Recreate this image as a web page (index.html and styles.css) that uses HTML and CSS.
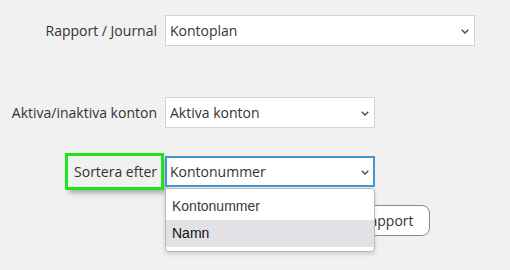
FILE: index.html
```html
<!DOCTYPE html>
<html>
    <head>
        <title>Rapporter</title>
        <link rel="stylesheet" href="styles.css">
    </head>
    <body>
        <form id="report">
            <div class="row">
                <label class="field_label" for="report_type">Rapport / Journal</label>
                <span class="select_wrap wide">
                    <select id="report_type">
                        <option>Kontoplan</option>
                    </select>
                    <svg class="chevron" width="8" height="5" viewBox="0 0 8 5"><path d="M0.7 0.7 L4 4 L7.3 0.7" /></svg>
                </span>
            </div>

            <div class="row row_spaced">
                <label class="field_label" for="active">Aktiva/inaktiva konton</label>
                <span class="select_wrap">
                    <select id="active">
                        <option>Aktiva konton</option>
                    </select>
                    <svg class="chevron" width="8" height="5" viewBox="0 0 8 5"><path d="M0.7 0.7 L4 4 L7.3 0.7" /></svg>
                </span>
            </div>

            <div class="row row_sort">
                <label class="field_label marked" for="sort">Sortera efter</label>
                <span class="select_wrap">
                    <select id="sort" class="focused">
                        <option>Kontonummer</option>
                        <option>Namn</option>
                    </select>
                    <svg class="chevron" width="8" height="5" viewBox="0 0 8 5"><path d="M0.7 0.7 L4 4 L7.3 0.7" /></svg>
                    <ul class="dropdown">
                        <li>Kontonummer</li>
                        <li class="hover">Namn</li>
                    </ul>
                </span>
            </div>

            <div class="row row_button">
                <span></span>
                <button type="button" class="report_button">Skapa rapport</button>
            </div>
        </form>
    </body>
</html>
```

FILE: styles.css
```css
html, body {
    height: 100%;
}
body {
    background: #f1f1f1;
    margin: 0px;
    font-family: "Open Sans", sans-serif;
    font-size: 14px;
    color: #333;
}
#report {
    padding-top: 15px;
    min-height: 100%;
    box-sizing: border-box;
}
.row {
    display: grid;
    grid-template-columns: 161px auto;
    column-gap: 4px;
    align-items: center;
}
.row_spaced {
    margin-top: 51px;
}
.row_sort {
    margin-top: 28px;
    position: relative;
    z-index: 2;
}
.row_button {
    margin-top: 18px;
}
.field_label {
    justify-self: end;
    padding-right: 4px;
    line-height: 31px;
}
.marked {
    padding-left: 6px;
    outline: 3px solid #1fe31f;
    box-shadow: 3px 4px 5px 2px rgba(0, 0, 0, 0.3);
}
.select_wrap {
    position: relative;
    display: inline-block;
    width: 210px;
    justify-self: start;
}
.select_wrap.wide {
    width: 310px;
}
select {
    appearance: none;
    display: block;
    width: 100%;
    height: 31px;
    box-sizing: border-box;
    margin: 0px;
    padding: 0px 20px 0px 4px;
    border: 1px solid #d2d2d2;
    border-radius: 0px;
    background: #fff;
    font-family: "Open Sans", sans-serif;
    font-size: 14px;
    color: #333;
    outline: none;
}
select.focused {
    border-color: #4197d8;
    box-shadow: inset 0 0 0 1px #4197d8;
}
.chevron {
    position: absolute;
    right: 6px;
    top: 14px;
    pointer-events: none;
}
.chevron path {
    fill: none;
    stroke: #505050;
    stroke-width: 1.5;
}
.dropdown {
    position: absolute;
    left: 0px;
    top: 32px;
    width: 210px;
    box-sizing: border-box;
    margin: 0px;
    padding: 4px 0px;
    list-style: none;
    background: #fff;
    border: 1px solid #b9b9b9;
    border-radius: 0px 3px 4px 4px;
    box-shadow: 0px 2px 4px rgba(0, 0, 0, 0.15);
    font-family: "Liberation Sans", Arial, sans-serif;
    font-size: 14px;
}
.dropdown li {
    height: 27px;
    line-height: 27px;
    padding-left: 6px;
    color: #3a3a3a;
}
.dropdown li.hover {
    background: #e1e1e6;
    color: #111;
}
.report_button {
    justify-self: start;
    margin-left: 140px;
    height: 31px;
    padding: 0px 15px;
    background: #fff;
    border: 1px solid #8a8a8a;
    border-radius: 8px;
    font-family: "Open Sans", sans-serif;
    font-size: 14px;
    color: #333;
}
```
